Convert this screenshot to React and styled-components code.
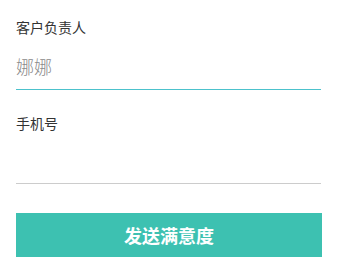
import React from "react";
import styled, { createGlobalStyle } from "styled-components";

const Global = createGlobalStyle`
  html, body { margin: 0; padding: 0; background: #fff; }
  body { font-family: "Noto Sans CJK SC", "Noto Sans", sans-serif; }
`;

const Page = styled.div`
  width: 337px;
  padding: 17px 16px 0 16px;
  box-sizing: border-box;
  display: flex;
  flex-direction: column;
`;

const Field = styled.div`
  display: flex;
  flex-direction: column;
  margin-top: ${(p) => p.$gap || 0}px;
`;

const Label = styled.div`
  font-size: 14px;
  line-height: 20px;
  height: 20px;
  color: #333;
`;

const InputBox = styled.div`
  height: ${(p) => p.$h}px;
  width: 305px;
  box-sizing: border-box;
  border-bottom: 1px solid ${(p) => (p.$active ? "#4cc2cc" : "#cccccc")};
  display: flex;
  padding-top: 6px;
`;

const Input = styled.input`
  border: 0;
  outline: none;
  flex: 1;
  min-width: 0;
  padding: 0;
  margin: 0;
  font-family: "Noto Sans CJK SC", "Noto Sans", sans-serif;
  font-size: 18px;
  font-weight: 300;
  color: #8a8a8a;
  background: transparent;
`;

const Button = styled.button`
  margin-top: 29px;
  height: 44px;
  width: 306px;
  border: none;
  background: #3dc1b1;
  color: #fff;
  font-family: "Noto Sans CJK SC", "Noto Sans", sans-serif;
  font-size: 18px;
  font-weight: 700;
  padding: 0;
  cursor: pointer;
`;

export default function App() {
  return (
    <>
      <Global />
      <Page>
        <Field>
          <Label>客户负责人</Label>
          <InputBox $active $h={53}>
            <Input defaultValue="娜娜" />
          </InputBox>
        </Field>
        <Field $gap={23}>
          <Label>手机号</Label>
          <InputBox $h={51}>
            <Input />
          </InputBox>
        </Field>
        <Button>发送满意度</Button>
      </Page>
    </>
  );
}
